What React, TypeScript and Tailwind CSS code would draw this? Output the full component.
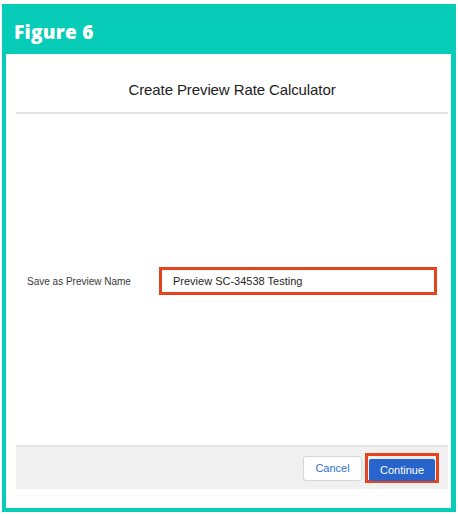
export default function App() {
  return (
    <div className="w-[458px] h-[516px] bg-white pt-[4px] pl-[2px] font-['Liberation_Sans',Arial,sans-serif]">
      <div className="w-[454px] h-[508px] bg-[#07ccb8] flex flex-col">
        <div className="h-[50px] flex items-center pl-[12px] pt-[6px]">
          <span className="font-['Open_Sans',sans-serif] font-extrabold text-[19px] text-white tracking-[0.3px]">
            Figure 6
          </span>
        </div>
        <div className="flex-1 ml-[4px] mr-[5px] mb-[4px] bg-white flex flex-col pl-[10px] pr-[3px]">
          <div className="h-[60px] border-b-2 border-[#e2e2e2] flex items-end justify-center pb-[11px]">
            <h1 className="text-[15px] text-[#222] tracking-[-0.1px]">Create Preview Rate Calculator</h1>
          </div>
          <div className="flex-1 flex items-center pl-[11px] pt-[3px]">
            <label className="w-[132px] text-[10px] text-[#3a3a3a]">Save as Preview Name</label>
            <div className="w-[278px] h-[28px] border-[3px] border-[#e8431f] flex items-center pl-[11px]">
              <span className="text-[11px] text-[#1f1f1f]">Preview SC-34538 Testing</span>
            </div>
          </div>
          <div className="h-[44px] bg-[#f0f0f0] border-t-2 border-[#e3e3e3] flex items-center justify-end gap-[3px] pr-[9px]">
            <button className="w-[59px] h-[25px] bg-white border border-[#d6d6d6] rounded-[3px] text-[11px] text-[#2f6fd1]">
              Cancel
            </button>
            <div className="w-[74px] h-[30px] border-[3px] border-[#e8431f] p-[1px]">
              <button className="w-full h-full bg-[#2764cc] rounded-[2px] text-[11px] text-white">
                Continue
              </button>
            </div>
          </div>
          <div className="h-[19px]" />
        </div>
      </div>
    </div>
  );
}
